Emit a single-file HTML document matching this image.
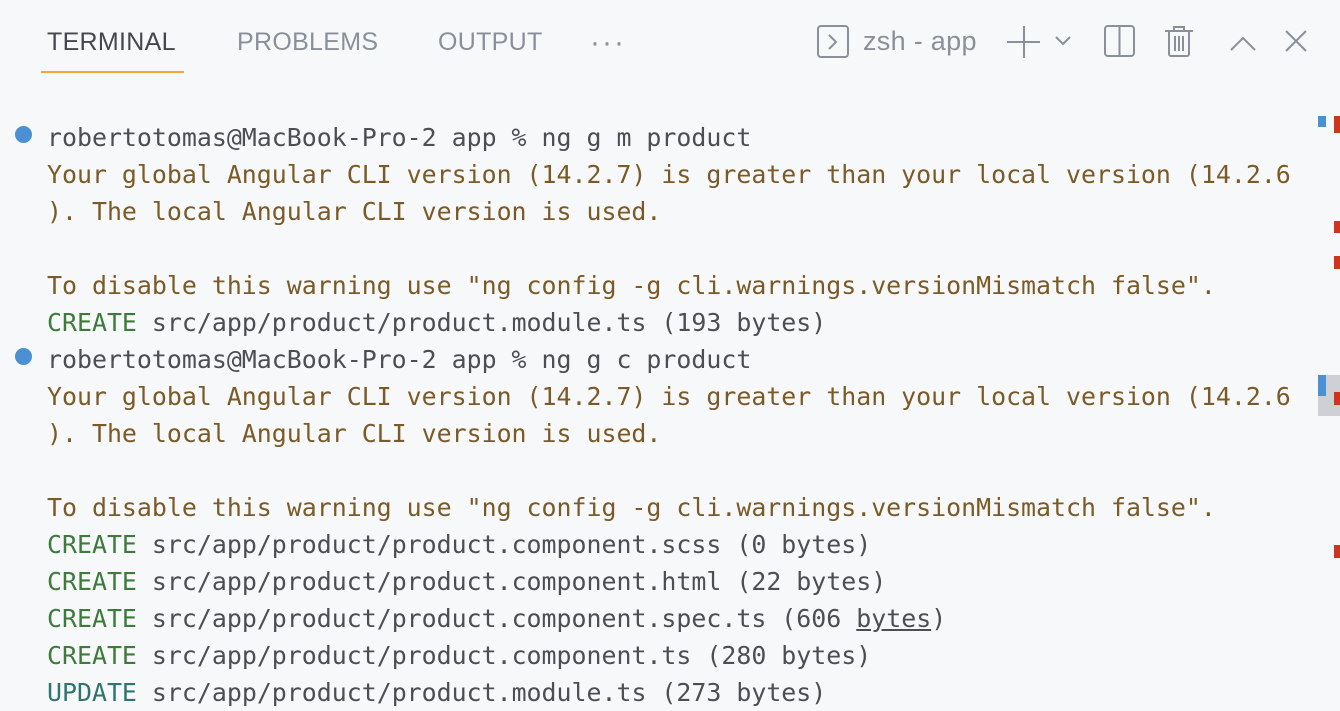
<!DOCTYPE html>
<html><head><meta charset="utf-8"><style>
body{margin:0;width:1340px;height:708px;background:#f7f8fa;overflow:hidden;position:relative;font-family:"Liberation Sans",sans-serif}
.tab{position:absolute;top:28px;font-size:25px;color:#8a9099;letter-spacing:0.3px}
.ul{position:absolute;left:41px;top:71px;width:143px;height:2px;background:#f0a83a}
pre{position:absolute;left:47px;top:119px;margin:0;font-family:"DejaVu Sans Mono","Liberation Mono",monospace;font-size:24.9px;line-height:37px;color:#7a5a26}
.p{color:#4c4e52}.g{color:#3e7a3c}.u{color:#2f7470}
.dot{position:absolute;left:15px;width:17px;height:17px;border-radius:50%;background:#4a90d2}
.m{position:absolute}
svg{position:absolute}
</style></head><body>
<div class="tab" style="left:47px;color:#44474d">TERMINAL</div>
<div class="tab" style="left:237px">PROBLEMS</div>
<div class="tab" style="left:438px">OUTPUT</div>
<div class="tab" style="left:590px;top:26px;font-size:30px;letter-spacing:2px">···</div>
<div class="ul"></div>
<svg width="540" height="60" style="left:800px;top:12px" fill="none" stroke="#8a9099" stroke-width="2">
<rect x="18" y="14" width="30" height="31" rx="3"/>
<path d="M29 23l7 7-7 7"/>
<path d="M224 14v32M207 30h33"/>
<path d="M256 25l7 7 7-7"/>
<rect x="305" y="14" width="29" height="30" rx="3"/><path d="M319.5 14v30"/>
<path d="M365 19h28M374 19v-4h10v4M369 19v23a2 2 0 0 0 2 2h16a2 2 0 0 0 2-2V19M375 24v15M379 24v15M383 24v15"/>
<path d="M431 38l12-12 12 12"/>
<path d="M486 19l20 20M506 19l-20 20"/>
</svg>
<div class="tab" style="left:863px;top:26px;font-size:27px;color:#8a9099">zsh - app</div>
<div class="dot" style="top:126px"></div>
<div class="dot" style="top:348px"></div>
<pre><span class="p">robertotomas@MacBook-Pro-2 app % ng g m product</span>
Your global Angular CLI version (14.2.7) is greater than your local version (14.2.6
). The local Angular CLI version is used.

To disable this warning use "ng config -g cli.warnings.versionMismatch false".
<span class="g">CREATE</span> <span class="p">src/app/product/product.module.ts (193 bytes)</span>
<span class="p">robertotomas@MacBook-Pro-2 app % ng g c product</span>
Your global Angular CLI version (14.2.7) is greater than your local version (14.2.6
). The local Angular CLI version is used.

To disable this warning use "ng config -g cli.warnings.versionMismatch false".
<span class="g">CREATE</span> <span class="p">src/app/product/product.component.scss (0 bytes)</span>
<span class="g">CREATE</span> <span class="p">src/app/product/product.component.html (22 bytes)</span>
<span class="g">CREATE</span> <span class="p">src/app/product/product.component.spec.ts (606 <u>bytes</u>)</span>
<span class="g">CREATE</span> <span class="p">src/app/product/product.component.ts (280 bytes)</span>
<span class="u">UPDATE</span> <span class="p">src/app/product/product.module.ts (273 bytes)</span></pre>
<div class="m" style="left:1318px;top:375px;width:22px;height:41px;background:#cfd0d3"></div>
<div class="m" style="left:1318px;top:116px;width:8px;height:11px;background:#4a90d2"></div>
<div class="m" style="left:1318px;top:375px;width:8px;height:21px;background:#4a90d2"></div>
<div class="m" style="left:1334px;top:116px;width:6px;height:17px;background:#d0341f"></div>
<div class="m" style="left:1334px;top:221px;width:6px;height:12px;background:#d0341f"></div>
<div class="m" style="left:1334px;top:256px;width:6px;height:13px;background:#d0341f"></div>
<div class="m" style="left:1334px;top:392px;width:6px;height:13px;background:#d0341f"></div>
<div class="m" style="left:1334px;top:545px;width:6px;height:13px;background:#d0341f"></div>
</body></html>
